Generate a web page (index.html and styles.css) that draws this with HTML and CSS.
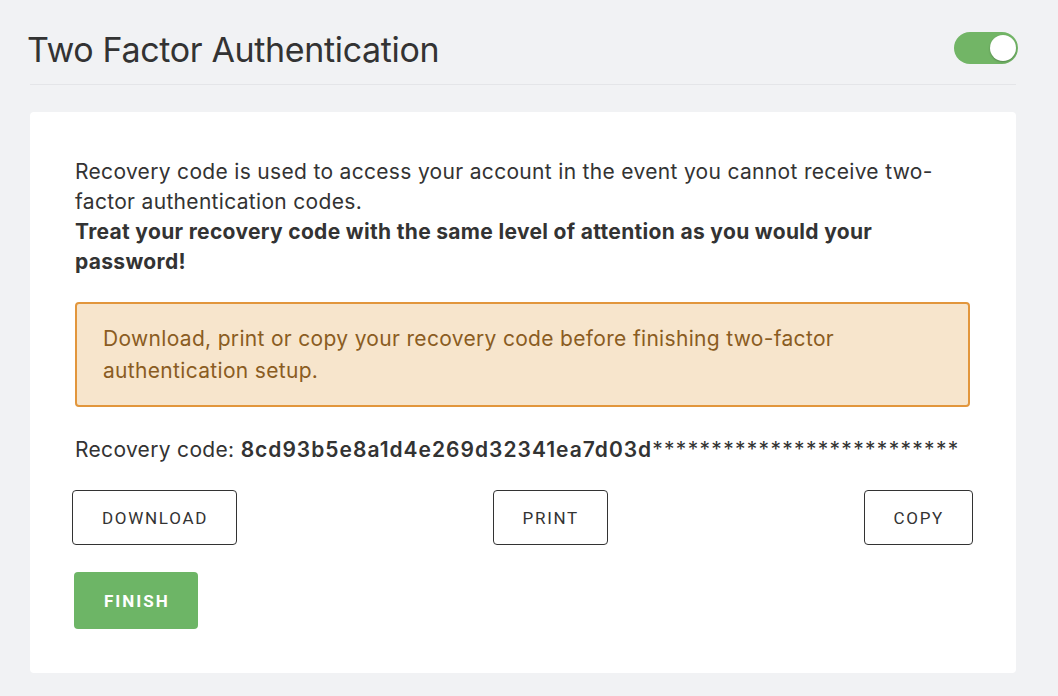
FILE: index.html
```html
<!DOCTYPE html>
<html>
<head>
<meta charset="utf-8">
<link rel="stylesheet" href="styles.css">
</head>
<body>
<div class="page">
  <header class="header">
    <h1 class="title">Two Factor Authentication</h1>
    <div class="toggle"><span class="knob"></span></div>
  </header>
  <section class="card">
    <p class="intro">Recovery code is used to access your account in the event you cannot receive two-factor authentication codes.<br><strong>Treat your recovery code with the same level of attention as you would your password!</strong></p>
    <div class="warning">Download, print or copy your recovery code before finishing two-factor authentication setup.</div>
    <p class="code">Recovery code: <strong>8cd93b5e8a1d4e269d32341ea7d03d</strong><span class="mask">**************************</span></p>
    <div class="actions">
      <button class="btn">DOWNLOAD</button>
      <button class="btn">PRINT</button>
      <button class="btn">COPY</button>
    </div>
    <button class="finish">FINISH</button>
  </section>
</div>
</body>
</html>
```
FILE: styles.css
```css
html, body {
  margin: 0;
  padding: 0;
  background: #f1f2f4;
}
body {
  font-family: "Inter", "Liberation Sans", sans-serif;
  color: #333;
}
.page {
  padding: 0 42px 0 30px;
}
.header {
  display: flex;
  align-items: flex-start;
  justify-content: space-between;
  padding: 30px 0 14px;
  border-bottom: 1px solid #e4e5e8;
}
.title {
  margin: 0 0 0 -3px;
  font-size: 34px;
  line-height: 40px;
  font-weight: 400;
  color: #333;
  letter-spacing: -0.35px;
}
.toggle {
  width: 64px;
  height: 32px;
  border-radius: 16px;
  background: #72b566;
  display: flex;
  align-items: center;
  justify-content: flex-end;
  padding: 0 2px;
  box-sizing: border-box;
  margin-right: -2px;
  margin-top: 2px;
}
.knob {
  width: 26px;
  height: 26px;
  border-radius: 50%;
  background: #fff;
  box-shadow: 0 1px 2px rgba(0,0,0,0.25);
}
.card {
  margin-top: 27px;
  background: #fff;
  border-radius: 4px;
  padding: 45px 46px 44px 45px;
}
.intro {
  margin: 0;
  font-size: 21px;
  line-height: 30px;
  letter-spacing: 0.32px;
}
.intro strong {
  font-weight: 700;
}
.warning {
  margin-top: 25px;
  border: 2px solid #e2963c;
  background: #f7e5cc;
  border-radius: 4px;
  padding: 19px 26px 18px;
  font-size: 21px;
  line-height: 32px;
  letter-spacing: 0.32px;
  color: #8a5c22;
}
.code {
  margin: 28px 0 0;
  font-size: 21px;
  line-height: 30px;
  letter-spacing: 0.32px;
}
.code strong {
  font-weight: 600;
  letter-spacing: 1px;
}
.mask {
  letter-spacing: 1.3px;
}
.actions {
  margin: 25px -3px 0 -3px;
  display: flex;
  justify-content: space-between;
}
.btn {
  height: 55px;
  padding: 0 28px 0 29px;
  background: #fff;
  border: 1.5px solid #333;
  border-radius: 4px;
  font-family: "Roboto", "Liberation Sans", sans-serif;
  font-size: 17px;
  letter-spacing: 1.7px;
  color: #333;
}
.finish {
  display: block;
  margin-top: 27px;
  margin-left: -1px;
  height: 57px;
  padding: 0 28px 0 30px;
  background: #6db566;
  border: none;
  border-radius: 4px;
  font-family: "Roboto", "Liberation Sans", sans-serif;
  font-weight: 700;
  font-size: 17px;
  letter-spacing: 2px;
  color: #fff;
}
```
